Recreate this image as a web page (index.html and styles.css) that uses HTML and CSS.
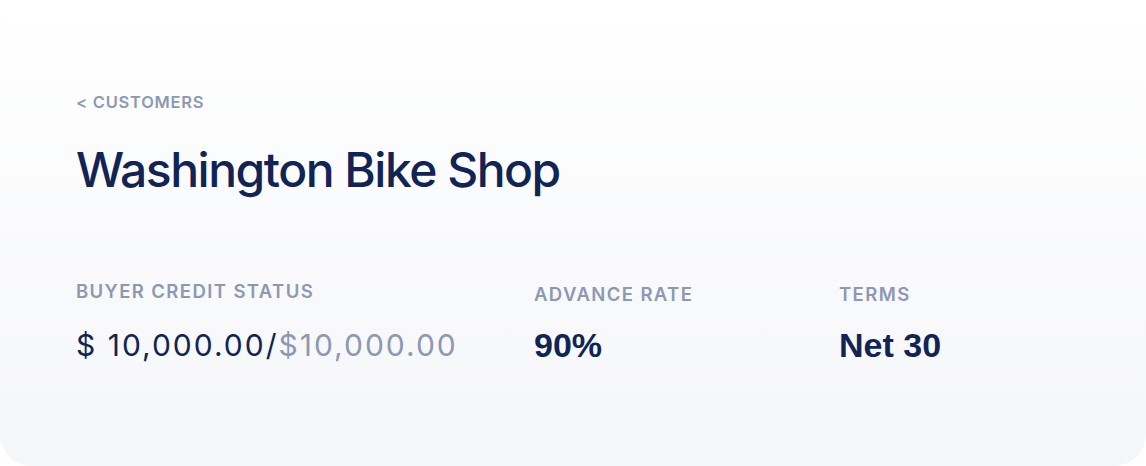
FILE: index.html
```html
<!DOCTYPE html>
<html lang="en">
<head>
<meta charset="utf-8">
<link rel="stylesheet" href="styles.css">
<title>Washington Bike Shop</title>
</head>
<body>
<main class="card">
  <a class="back" href="#">&lt; CUSTOMERS</a>
  <h1 class="title">Washington Bike Shop</h1>
  <section class="stats">
    <div class="stat stat-credit">
      <div class="label">BUYER CREDIT STATUS</div>
      <div class="value value-light">$ 10,000.00/<span class="muted">$10,000.00</span></div>
    </div>
    <div class="stat stat-rate">
      <div class="label label-low">ADVANCE RATE</div>
      <div class="value value-bold">90%</div>
    </div>
    <div class="stat stat-terms">
      <div class="label label-low">TERMS</div>
      <div class="value value-bold">Net 30</div>
    </div>
  </section>
</main>
</body>
</html>
```
FILE: styles.css
```css
html, body {
  margin: 0;
  padding: 0;
  background: #ffffff;
}
body {
  width: 1146px;
  height: 466px;
  font-family: Inter, "Liberation Sans", sans-serif;
}
.card {
  box-sizing: border-box;
  width: 1146px;
  height: 466px;
  border-radius: 32px;
  background: linear-gradient(180deg, #ffffff 0%, #f5f6f9 100%);
  padding: 93px 76px 0 76px;
  display: flex;
  flex-direction: column;
}
.back {
  font-size: 16.5px;
  font-weight: 600;
  color: #8d98b3;
  text-decoration: none;
  line-height: 18px;
  letter-spacing: 0.75px;
}
.title {
  margin: 32px 0 0 0;
  font-size: 48px;
  font-weight: 500;
  color: #112455;
  line-height: 54px;
  letter-spacing: -1.5px;
}
.stats {
  margin-top: 83px;
  display: flex;
}
.stat {
  display: flex;
  flex-direction: column;
}
.stat-credit { width: 458px; }
.stat-rate { width: 305px; }
.label {
  font-size: 18.5px;
  font-weight: 600;
  color: #8d98b3;
  line-height: 22px;
  letter-spacing: 1.4px;
}
.label-low { margin-top: 2.5px; margin-bottom: -2.5px; }
.value {
  margin-top: 25px;
  color: #112455;
  line-height: 36px;
}
.value-light {
  font-size: 30px;
  font-weight: 400;
  letter-spacing: 2px;
}
.value-bold {
  font-family: "Liberation Sans", Arial, sans-serif;
  font-size: 34px;
  font-weight: 700;
}
.muted { color: #8d98b3; }
```
